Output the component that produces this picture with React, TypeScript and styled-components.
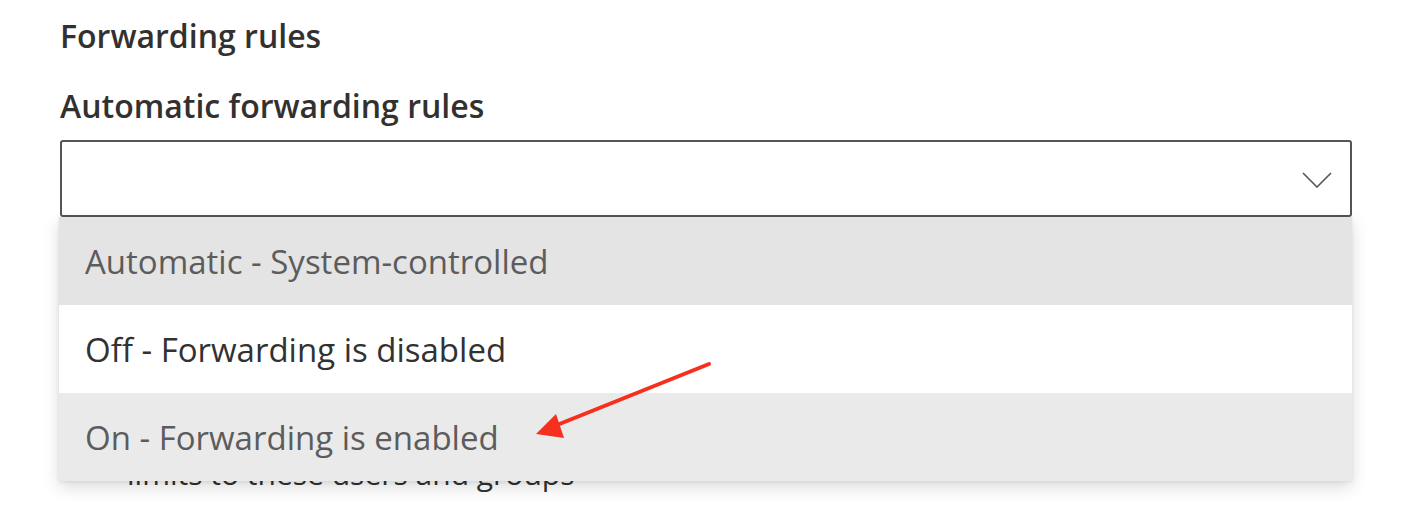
import styled, { createGlobalStyle } from "styled-components";

const GlobalStyle = createGlobalStyle`
  body {
    margin: 0;
    background: #ffffff;
    font-family: "Open Sans", "Noto Sans", sans-serif;
    color: #323130;
  }
`;

type Option = { label: string; tone: "muted" | "plain" | "soft" };

const options: Option[] = [
  { label: "Automatic - System-controlled", tone: "muted" },
  { label: "Off - Forwarding is disabled", tone: "plain" },
  { label: "On - Forwarding is enabled", tone: "soft" },
];

export default function App() {
  return (
    <>
      <GlobalStyle />
      <Page>
        <SectionTitle>Forwarding rules</SectionTitle>
        <FieldLabel>Automatic forwarding rules</FieldLabel>
        <SelectBox>
          <Chevron viewBox="0 0 30 16" aria-hidden>
            <polyline points="1,1 15,15 29,1" />
          </Chevron>
        </SelectBox>
        {/* sits under the open menu, only its bottom edge peeks out */}
        <BehindText>limits to these users and groups</BehindText>

        <Menu>
          {options.map((o) => (
            <MenuItem key={o.label} $tone={o.tone}>
              {o.label}
            </MenuItem>
          ))}
        </Menu>

        <Pointer viewBox="0 0 1412 532" aria-hidden>
          <line x1="709" y1="364" x2="552" y2="427" />
          <polygon points="536,434 556,414 564,438" />
        </Pointer>
      </Page>
    </>
  );
}

const Page = styled.div`
  position: relative;
  height: 532px;
  overflow: hidden;
  padding: 16px 60px 0 60px;
  box-sizing: border-box;
`;

const SectionTitle = styled.h2`
  margin: 0;
  font-size: 32px;
  line-height: 40px;
  font-weight: 600;
  color: #323130;
`;

const FieldLabel = styled.div`
  margin-top: 30px;
  font-size: 32px;
  line-height: 40px;
  font-weight: 600;
  color: #323130;
`;

const SelectBox = styled.div`
  margin-top: 14px;
  height: 77px;
  box-sizing: border-box;
  border: 2px solid #555555;
  border-radius: 3px;
  display: flex;
  align-items: center;
  justify-content: flex-end;
  padding-right: 18px;
`;

const Chevron = styled.svg`
  width: 30px;
  height: 16px;
  margin-top: 2px;
  fill: none;
  stroke: #555555;
  stroke-width: 1.6;
`;

const BehindText = styled.div`
  margin-top: 237px;
  padding-left: 67px;
  font-size: 30px;
  line-height: 40px;
  color: #323130;
`;

const Menu = styled.div`
  position: absolute;
  top: 217px;
  left: 59px;
  width: 1293px;
  background: #ffffff;
  box-shadow: 0 6px 16px rgba(0, 0, 0, 0.14), 0 1px 4px rgba(0, 0, 0, 0.08);
`;

const toneBg = { muted: "#e4e4e4", plain: "#ffffff", soft: "#eaeaea" };
const toneFg = { muted: "#5c5c5c", plain: "#323232", soft: "#5c5c5c" };

const MenuItem = styled.div<{ $tone: Option["tone"] }>`
  height: 88px;
  display: flex;
  align-items: center;
  padding-left: 26px;
  font-size: 33px;
  background: ${(p) => toneBg[p.$tone]};
  color: ${(p) => toneFg[p.$tone]};
`;

const Pointer = styled.svg`
  position: absolute;
  inset: 0;
  width: 1412px;
  height: 532px;
  pointer-events: none;
  line {
    stroke: #f5301e;
    stroke-width: 4;
    stroke-linecap: round;
  }
  polygon {
    fill: #f5301e;
  }
`;
